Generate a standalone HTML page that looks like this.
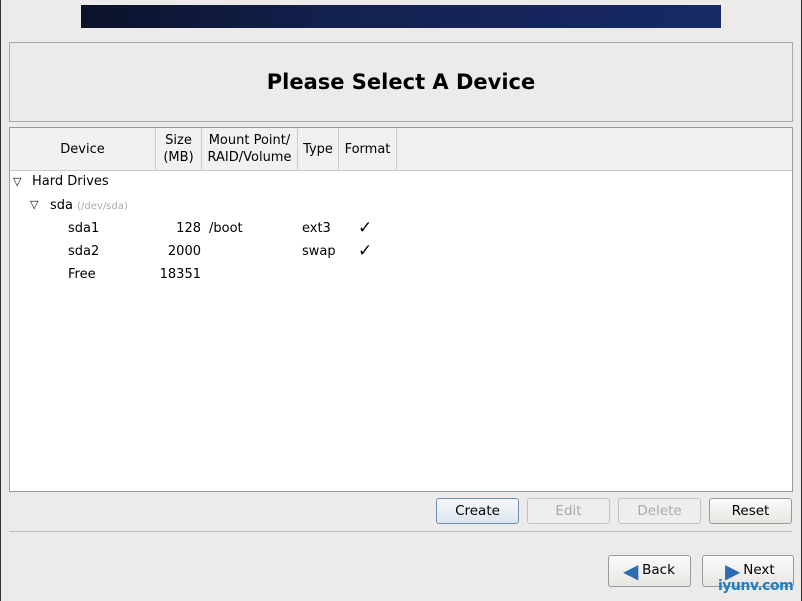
<!DOCTYPE html><html><head><style>
body{margin:0;width:802px;height:601px;background:#edebe9;position:relative;overflow:hidden;font-family:"DejaVu Sans","Liberation Sans",sans-serif;font-size:13px;color:#000}
.a{position:absolute}
.btn{position:absolute;border:1px solid #999;border-radius:3px;background:linear-gradient(#fbfbfa,#e8e6e3);text-align:center;box-sizing:border-box;line-height:24px;font-size:13.5px}
.h{position:absolute;top:0;height:42px;display:flex;align-items:center;justify-content:center;text-align:center;line-height:17px;font-size:13px;border-right:1px solid #ccc;box-sizing:border-box}
</style></head><body>
<div class="a" style="left:0;top:0;width:1px;height:601px;background:#333"></div>
<div class="a" style="right:0;top:0;width:1px;height:601px;background:#333"></div>
<div class="a" style="left:81px;top:5px;width:640px;height:23px;background:linear-gradient(90deg,#0b1229,#13214f 40%,#172a68)"></div>
<div class="a" style="left:9px;top:42px;width:782px;height:78px;border:1px solid #a8a8a8;background:#edebe9"></div>
<div class="a" style="left:0;top:70px;width:802px;text-align:center;font-weight:bold;font-size:21px">Please Select A Device</div>
<div class="a" style="left:9px;top:127px;width:782px;height:363px;border:1px solid #999;background:#fff">
 <div class="a" style="left:0;top:0;width:782px;height:42px;background:#f2f1f0;border-bottom:1px solid #ccc"></div>
 <div class="h" style="left:0;width:146px">Device</div>
 <div class="h" style="left:146px;width:46px">Size<br>(MB)</div>
 <div class="h" style="left:192px;width:96px">Mount Point/<br>RAID/Volume</div>
 <div class="h" style="left:288px;width:41px">Type</div>
 <div class="h" style="left:329px;width:58px">Format</div>
 <div class="a" style="left:3px;top:47px;font-size:11px">▽</div><div class="a" style="left:22px;top:46px">Hard Drives</div>
 <div class="a" style="left:20px;top:70px;font-size:11px">▽</div><div class="a" style="left:40px;top:70px">sda <span style="font-size:10px;color:#aaa">(/dev/sda)</span></div>
 <div class="a" style="left:58px;top:93px">sda1</div><div class="a" style="left:140px;top:93px;width:51px;text-align:right">128</div><div class="a" style="left:199px;top:93px">/boot</div><div class="a" style="left:292px;top:93px">ext3</div><div class="a" style="left:348px;top:90px;font-size:17px">✓</div>
 <div class="a" style="left:58px;top:116px">sda2</div><div class="a" style="left:140px;top:116px;width:51px;text-align:right">2000</div><div class="a" style="left:292px;top:116px">swap</div><div class="a" style="left:348px;top:113px;font-size:17px">✓</div>
 <div class="a" style="left:58px;top:139px">Free</div><div class="a" style="left:140px;top:139px;width:51px;text-align:right">18351</div>
</div>
<div class="btn" style="left:436px;top:498px;width:83px;height:26px;border-color:#6f8fb8;background:linear-gradient(#f6f8fb,#dde5ef)">Create</div>
<div class="btn" style="left:527px;top:498px;width:83px;height:26px;color:#aaa;border-color:#c3c3c3;background:#efeeec">Edit</div>
<div class="btn" style="left:618px;top:498px;width:83px;height:26px;color:#aaa;border-color:#c3c3c3;background:#efeeec">Delete</div>
<div class="btn" style="left:709px;top:498px;width:83px;height:26px">Reset</div>
<div class="a" style="left:9px;top:531px;width:783px;height:1px;background:#bbb"></div>
<div class="btn" style="left:608px;top:555px;width:83px;height:32px;line-height:28px;padding-left:18px"><span class="a" style="left:14px;top:1px;color:#2d6bb5;font-size:20px">◀</span>Back</div>
<div class="btn" style="left:702px;top:555px;width:92px;height:32px;line-height:28px;padding-left:22px"><span class="a" style="left:22px;top:1px;color:#2d6bb5;font-size:20px">▶</span>Next</div>
<div class="a" style="left:718px;top:578px;color:#1a7fc4;font-weight:bold;font-size:14px;letter-spacing:-0.5px">iyunv.com</div>
</body></html>
